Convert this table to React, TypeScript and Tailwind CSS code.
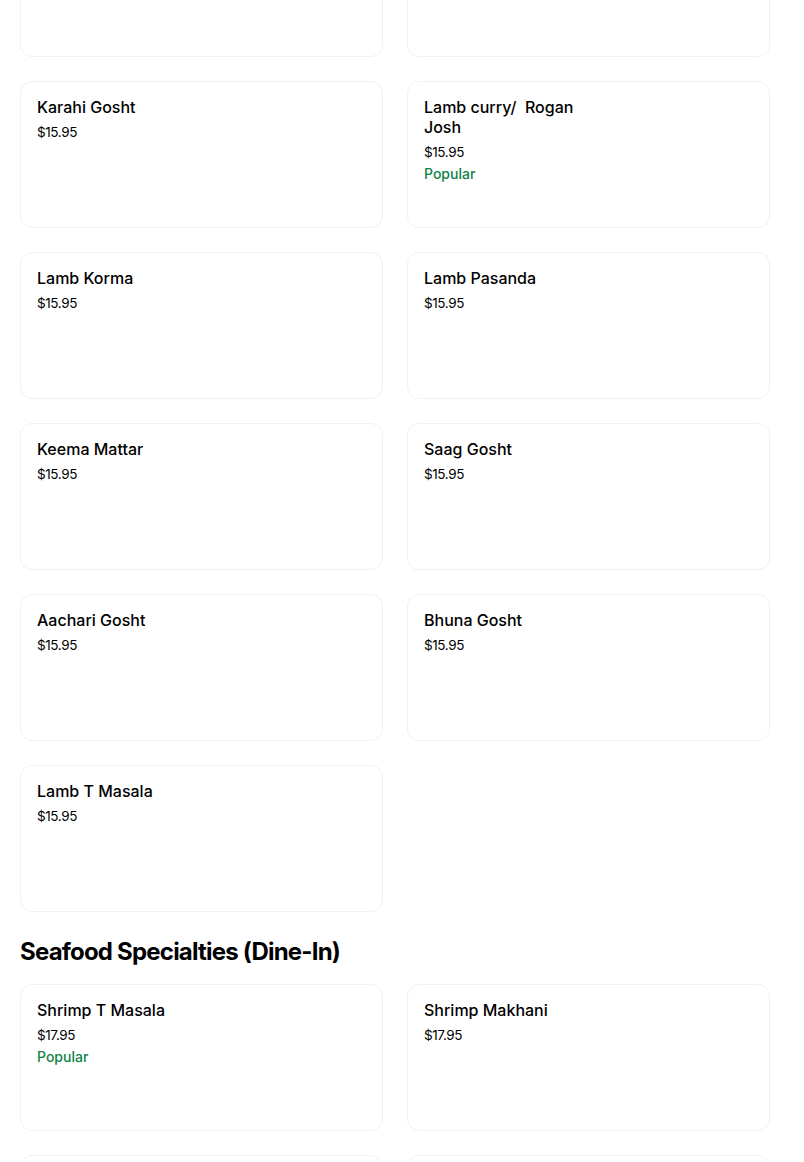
import React from 'react';

type Item = { name: string; price: string; popular?: boolean };

const lamb: Item[] = [
  { name: '', price: '' },
  { name: '', price: '' },
  { name: 'Karahi Gosht', price: '$15.95' },
  { name: 'Lamb curry/  Rogan Josh', price: '$15.95', popular: true },
  { name: 'Lamb Korma', price: '$15.95' },
  { name: 'Lamb Pasanda', price: '$15.95' },
  { name: 'Keema Mattar', price: '$15.95' },
  { name: 'Saag Gosht', price: '$15.95' },
  { name: 'Aachari Gosht', price: '$15.95' },
  { name: 'Bhuna Gosht', price: '$15.95' },
  { name: 'Lamb T Masala', price: '$15.95' },
];

const seafood: Item[] = [
  { name: 'Shrimp T Masala', price: '$17.95', popular: true },
  { name: 'Shrimp Makhani', price: '$17.95' },
  { name: '', price: '' },
  { name: '', price: '' },
];

const Card = ({ item }: { item: Item }) => (
  <div className="h-[147px] rounded-xl border border-[#f1f1f1] bg-white px-4 pt-[15px]">
    <div className="max-w-[175px]">
      {item.name && (
        <h3 className="whitespace-pre-wrap text-[16px] leading-5 font-medium text-black">{item.name}</h3>
      )}
      {item.price && (
        <p className="mt-[5px] text-[13.5px] leading-5 tracking-[-0.4px] text-black">{item.price}</p>
      )}
      {item.popular && (
        <p className="mt-[2px] text-[14px] leading-5 font-medium text-[#0e8345]">Popular</p>
      )}
    </div>
  </div>
);

const App = () => {
  return (
    <div className="h-[1162px] overflow-hidden bg-white" style={{ fontFamily: 'Inter, "Noto Sans", sans-serif' }}>
      <div className="ml-5 mt-[-90px] w-[750px]">
        <div className="grid grid-cols-2 gap-6">
          {lamb.map((item, i) => (
            <Card key={i} item={item} />
          ))}
        </div>
        <h2 className="mt-6 mb-4 text-[24px] leading-8 font-bold tracking-[-0.8px] text-black">
          Seafood Specialties (Dine-In)
        </h2>
        <div className="grid grid-cols-2 gap-6">
          {seafood.map((item, i) => (
            <Card key={i} item={item} />
          ))}
        </div>
      </div>
    </div>
  );
};

export default App;
